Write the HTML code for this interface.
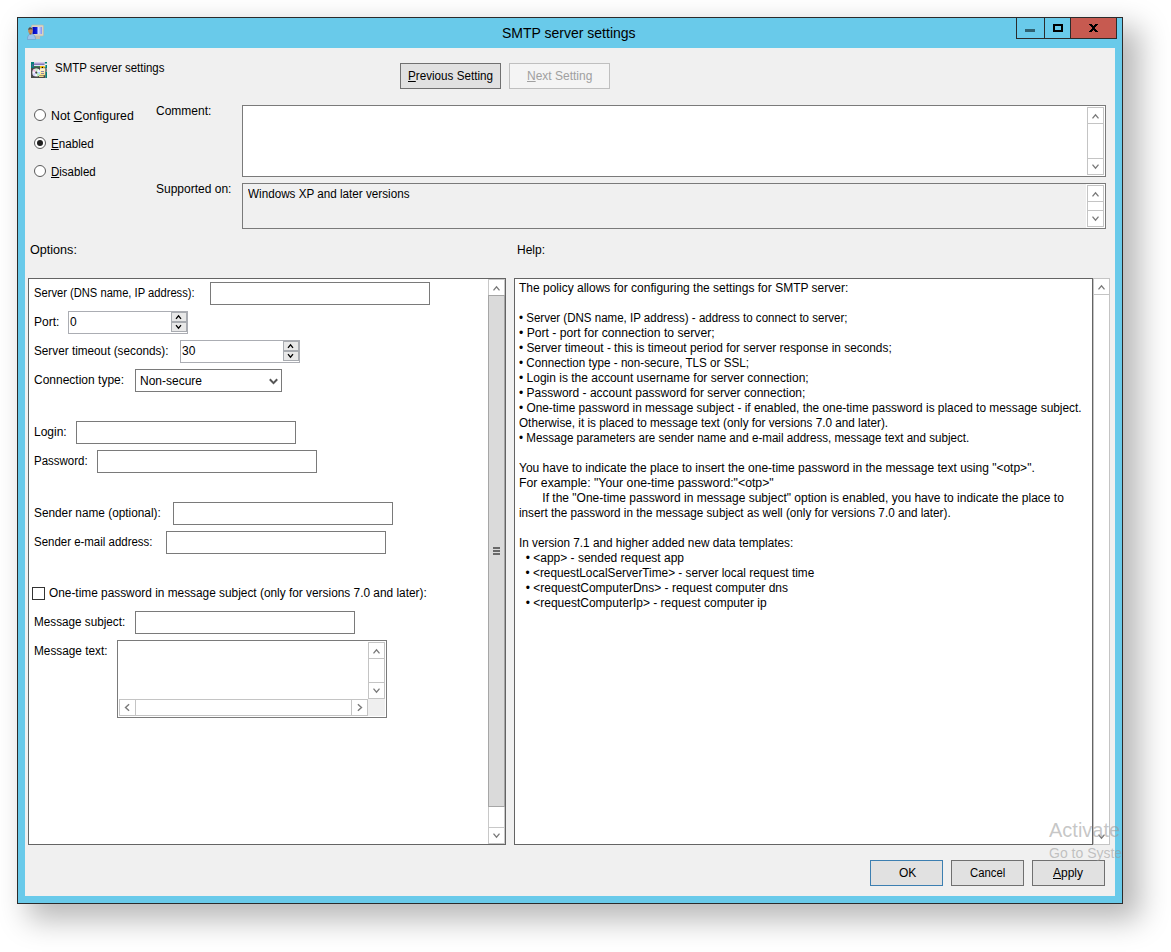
<!DOCTYPE html>
<html><head><meta charset="utf-8">
<style>
html,body{margin:0;padding:0;}
body{width:1171px;height:952px;overflow:hidden;background:#fff;position:relative;font-family:"Liberation Sans",sans-serif;font-size:12px;color:#000;}
.a{position:absolute;box-sizing:border-box;}
.t{position:absolute;white-space:pre;line-height:15px;font-size:12px;}
.u{text-decoration:underline;}
</style></head><body>

<div class="a" style="left:17px;top:17px;width:1106px;height:887px;border:1px solid #2b2b2b;background:#69caea;box-shadow:14px 13px 28px 3px rgba(0,0,0,0.28);"></div>
<div class="a" style="left:25px;top:48px;width:1090px;height:848px;background:#f0f0f0;"></div>
<svg class="a" style="left:27px;top:24px" width="17" height="17" viewBox="0 0 17 17">
<defs><linearGradient id="scr" x1="0" x2="1" y1="0" y2="0"><stop offset="0" stop-color="#0000b0"/><stop offset="0.45" stop-color="#1020e0"/><stop offset="0.6" stop-color="#d8e0ff"/><stop offset="1" stop-color="#8090f0"/></linearGradient></defs>
<rect x="4.5" y="1" width="12" height="11" rx="1" fill="#d8d2c4" stroke="#bdb5a5" stroke-width="0.6"/>
<rect x="5.5" y="3" width="9.5" height="7" fill="url(#scr)"/>
<rect x="8" y="12" width="5" height="3" fill="#c4bcae"/>
<path d="M0.3 15.5 Q0.5 10 4.2 10 Q8.3 10 8.6 15.5 Z" fill="#9cc4ec" stroke="#6c98c8" stroke-width="0.6"/>
<ellipse cx="3.4" cy="6.6" rx="2.2" ry="3.1" fill="#c88a50"/>
<path d="M1.2 6 Q1.5 2.8 3.6 3.4 Q5.6 3.4 5.6 6 Q4.5 4.6 1.2 6Z" fill="#505050"/>
<rect x="2.6" y="9" width="1.8" height="1.5" fill="#a86a38"/>
</svg>
<div class="t" style="left:502px;top:24px;font-size:14px;line-height:18px;">SMTP server settings</div>
<div class="a" style="left:1016px;top:17px;width:29px;height:22px;border:1px solid #2b2b2b;"></div>
<div class="a" style="left:1044px;top:17px;width:27px;height:22px;border:1px solid #2b2b2b;"></div>
<div class="a" style="left:1070px;top:17px;width:47px;height:22px;border:1px solid #2b2b2b;background:#c75a50;"></div>
<div class="a" style="left:1025px;top:29px;width:10px;height:3px;background:#2f6272;"></div>
<div class="a" style="left:1053px;top:24px;width:10px;height:8px;border:2px solid #000;"></div>
<svg class="a" style="left:1089px;top:24px" width="9" height="8" viewBox="0 0 9 8" shape-rendering="crispEdges" fill="#000"><rect x="0" y="0" width="3" height="1"/><rect x="6" y="0" width="3" height="1"/><rect x="1" y="1" width="3" height="1"/><rect x="5" y="1" width="3" height="1"/><rect x="2" y="2" width="5" height="1"/><rect x="3" y="3" width="3" height="1"/><rect x="3" y="4" width="3" height="1"/><rect x="2" y="5" width="5" height="1"/><rect x="1" y="6" width="3" height="1"/><rect x="5" y="6" width="3" height="1"/><rect x="0" y="7" width="3" height="1"/><rect x="6" y="7" width="3" height="1"/></svg>
<svg class="a" style="left:31px;top:62px" width="16" height="16" viewBox="0 0 16 16">
<defs><linearGradient id="pur" x1="0" x2="0" y1="0" y2="1"><stop offset="0" stop-color="#e8e0f8"/><stop offset="1" stop-color="#7060a8"/></linearGradient>
<linearGradient id="pad" x1="0" x2="0" y1="0" y2="1"><stop offset="0" stop-color="#fff8e0"/><stop offset="1" stop-color="#ffe080"/></linearGradient></defs>
<rect x="0" y="5" width="14.6" height="11" fill="#4a4a4a"/>
<rect x="0" y="0" width="3" height="6" fill="#008078"/>
<rect x="13.6" y="0" width="2.4" height="1.5" fill="#008078"/>
<rect x="14.4" y="3" width="1.6" height="3.5" fill="#008078"/>
<rect x="14.6" y="9.5" width="1.4" height="6.5" fill="#008078"/>
<rect x="14.6" y="6.5" width="1.4" height="3" fill="#808080"/>
<rect x="3" y="0" width="10.6" height="3" fill="url(#pur)"/>
<rect x="1.3" y="2" width="1" height="3" fill="#7050a0"/>
<rect x="3" y="3" width="10.6" height="1" fill="#e0e0f8"/>
<rect x="3" y="4" width="6" height="1.2" fill="#3a8050"/>
<rect x="9" y="4" width="4.6" height="2" fill="#f8c010"/>
<circle cx="11.4" cy="5.6" r="0.8" fill="#000"/>
<circle cx="5.3" cy="10.6" r="4" fill="#f4f2ff"/>
<path d="M5.3 10.6 L1.6 9 A4 4 0 0 1 3.6 7 Z" fill="#f4b8e0"/>
<path d="M5.3 10.6 L4 7 A4 4 0 0 1 7.5 7.3 Z" fill="#c8f0c8"/>
<path d="M5.3 10.6 L8.8 12 A4 4 0 0 1 6.6 14.4 Z" fill="#b8f0b0"/>
<path d="M5.3 10.6 L3.5 14.2 A4 4 0 0 1 1.5 12 Z" fill="#d0d0ff"/>
<path d="M5.3 10.6 L9.2 10 A4 4 0 0 1 8.8 12 Z" fill="#a8d8ff"/>
<circle cx="5.3" cy="10.6" r="1.1" fill="#404040"/>
<rect x="9" y="6.2" width="5" height="7" fill="url(#pad)"/>
<rect x="10" y="9" width="3" height="0.9" fill="#8078a8"/>
<rect x="10" y="11" width="3" height="0.9" fill="#8078a8"/>
<rect x="8" y="13.6" width="4.6" height="1.3" fill="#ffe890"/>
</svg>
<div class="t" style="left:55px;top:61px;transform:scaleX(0.9558);transform-origin:0 0;">SMTP server settings</div>
<div class="a" style="left:400px;top:63px;width:101px;height:26px;background:#e1e1e1;border:1px solid #707070;"></div>
<div class="t" style="left:408px;top:69px;transform:scaleX(0.9724);transform-origin:0 0;"><span class="u">P</span>revious Setting</div>
<div class="a" style="left:509px;top:63px;width:101px;height:26px;background:#f4f4f4;border:1px solid #bfbfbf;"></div>
<div class="t" style="left:527px;top:69px;color:#a0a0a0;"><span class="u">N</span>ext Setting</div>
<div class="a" style="left:34px;top:109px;width:12px;height:12px;border:1px solid #5a5a5a;border-radius:50%;background:#fff;"></div>
<div class="t" style="left:51px;top:109px;transform:scaleX(1.0253);transform-origin:0 0;">Not <span class="u">C</span>onfigured</div>
<div class="a" style="left:34px;top:137px;width:12px;height:12px;border:1px solid #5a5a5a;border-radius:50%;background:#fff;"></div>
<div class="a" style="left:37px;top:140px;width:6px;height:6px;border-radius:50%;background:#1e1e1e;"></div>
<div class="t" style="left:51px;top:137px;transform:scaleX(0.9698);transform-origin:0 0;"><span class="u">E</span>nabled</div>
<div class="a" style="left:34px;top:165px;width:12px;height:12px;border:1px solid #5a5a5a;border-radius:50%;background:#fff;"></div>
<div class="t" style="left:51px;top:165px;transform:scaleX(0.9565);transform-origin:0 0;"><span class="u">D</span>isabled</div>
<div class="t" style="left:156px;top:104px;">Comment:</div>
<div class="t" style="left:156px;top:182px;">Supported on:</div>
<div class="a" style="left:242px;top:105px;width:864px;height:72px;background:#fff;border:1px solid #7a7a7a;"></div>
<div class="a" style="left:1087px;top:107px;width:17px;height:68px;border:1px solid #c4c4c4;background:#fff;"></div>
<div class="a" style="left:1087px;top:123px;width:17px;height:1px;background:#c4c4c4;"></div>
<div class="a" style="left:1087px;top:158px;width:17px;height:1px;background:#c4c4c4;"></div>
<div class="a" style="left:242px;top:183px;width:864px;height:46px;background:#f0f0f0;border:1px solid #7a7a7a;"></div>
<div class="a" style="left:1086px;top:184px;width:19px;height:44px;background:#fff;"></div>
<div class="a" style="left:1087px;top:185px;width:17px;height:42px;border:1px solid #c4c4c4;background:#fff;"></div>
<div class="a" style="left:1087px;top:201px;width:17px;height:1px;background:#c4c4c4;"></div>
<div class="a" style="left:1087px;top:210px;width:17px;height:1px;background:#c4c4c4;"></div>
<div class="a" style="left:1087px;top:210px;width:17px;height:1px;background:#c4c4c4;"></div>
<div class="t" style="left:248px;top:187px;transform:scaleX(0.9739);transform-origin:0 0;">Windows XP and later versions</div>
<div class="t" style="left:30px;top:243px;transform:scaleX(1.0500);transform-origin:0 0;">Options:</div>
<div class="t" style="left:517px;top:243px;">Help:</div>
<div class="a" style="left:28px;top:278px;width:478px;height:567px;background:#fff;border:1px solid #646464;"></div>
<div class="a" style="left:488px;top:279px;width:17px;height:565px;border:1px solid #c8c8c8;background:#fff;"></div>
<div class="a" style="left:488px;top:295px;width:17px;height:512px;background:#dadada;border:1px solid #a6a6a6;"></div>
<div class="a" style="left:488px;top:827px;width:17px;height:1px;background:#c8c8c8;"></div>
<div class="a" style="left:493px;top:547px;width:7px;height:2px;background:#686868;"></div>
<div class="a" style="left:493px;top:550px;width:7px;height:2px;background:#686868;"></div>
<div class="a" style="left:493px;top:553px;width:7px;height:2px;background:#686868;"></div>
<div class="t" style="left:34px;top:286px;transform:scaleX(0.9310);transform-origin:0 0;">Server (DNS name, IP address):</div>
<div class="a" style="left:210px;top:282px;width:220px;height:23px;background:#fff;border:1px solid #7a7a7a;"></div>
<div class="t" style="left:34px;top:315px;">Port:</div>
<div class="a" style="left:68px;top:311px;width:120px;height:23px;background:#fff;border:1px solid #abadb3;"></div>
<div class="a" style="left:171px;top:312px;width:16px;height:21px;background:#a8abb0;"></div>
<div class="a" style="left:172px;top:313px;width:14px;height:8px;background:#e8e8e8;"></div>
<div class="a" style="left:172px;top:323px;width:14px;height:8px;background:#e8e8e8;"></div>
<div class="a" style="left:171px;top:332px;width:16px;height:1px;background:#fff;"></div>
<div class="t" style="left:70px;top:315px;">0</div>
<div class="t" style="left:34px;top:344px;transform:scaleX(0.9793);transform-origin:0 0;">Server timeout (seconds):</div>
<div class="a" style="left:180px;top:340px;width:120px;height:23px;background:#fff;border:1px solid #abadb3;"></div>
<div class="a" style="left:283px;top:341px;width:16px;height:21px;background:#a8abb0;"></div>
<div class="a" style="left:284px;top:342px;width:14px;height:8px;background:#e8e8e8;"></div>
<div class="a" style="left:284px;top:352px;width:14px;height:8px;background:#e8e8e8;"></div>
<div class="a" style="left:283px;top:361px;width:16px;height:1px;background:#fff;"></div>
<div class="t" style="left:182px;top:344px;">30</div>
<div class="t" style="left:34px;top:373px;">Connection type:</div>
<div class="a" style="left:135px;top:369px;width:147px;height:23px;background:#fff;border:1px solid #7a7a7a;"></div>
<div class="t" style="left:140px;top:374px;">Non-secure</div>
<div class="t" style="left:34px;top:425px;">Login:</div>
<div class="a" style="left:76px;top:421px;width:220px;height:23px;background:#fff;border:1px solid #7a7a7a;"></div>
<div class="t" style="left:34px;top:454px;transform:scaleX(0.9574);transform-origin:0 0;">Password:</div>
<div class="a" style="left:97px;top:450px;width:220px;height:23px;background:#fff;border:1px solid #7a7a7a;"></div>
<div class="t" style="left:34px;top:506px;transform:scaleX(0.9843);transform-origin:0 0;">Sender name (optional):</div>
<div class="a" style="left:173px;top:502px;width:220px;height:23px;background:#fff;border:1px solid #7a7a7a;"></div>
<div class="t" style="left:34px;top:535px;transform:scaleX(0.9549);transform-origin:0 0;">Sender e-mail address:</div>
<div class="a" style="left:166px;top:531px;width:220px;height:23px;background:#fff;border:1px solid #7a7a7a;"></div>
<div class="a" style="left:32px;top:587px;width:13px;height:13px;background:#fff;border:1px solid #333;"></div>
<div class="t" style="left:49px;top:586px;transform:scaleX(0.9884);transform-origin:0 0;">One-time password in message subject (only for versions 7.0 and later):</div>
<div class="t" style="left:34px;top:615px;transform:scaleX(0.9769);transform-origin:0 0;">Message subject:</div>
<div class="a" style="left:135px;top:611px;width:220px;height:23px;background:#fff;border:1px solid #7a7a7a;"></div>
<div class="t" style="left:34px;top:644px;transform:scaleX(0.9833);transform-origin:0 0;">Message text:</div>
<div class="a" style="left:117px;top:640px;width:270px;height:78px;background:#fff;border:1px solid #7a7a7a;"></div>
<div class="a" style="left:368px;top:642px;width:17px;height:57px;border:1px solid #c4c4c4;background:#fff;"></div>
<div class="a" style="left:368px;top:658px;width:17px;height:1px;background:#c4c4c4;"></div>
<div class="a" style="left:368px;top:682px;width:17px;height:1px;background:#c4c4c4;"></div>
<div class="a" style="left:119px;top:699px;width:249px;height:17px;border:1px solid #c4c4c4;background:#fff;"></div>
<div class="a" style="left:135px;top:699px;width:1px;height:17px;background:#c4c4c4;"></div>
<div class="a" style="left:351px;top:699px;width:1px;height:17px;background:#c4c4c4;"></div>
<div class="a" style="left:368px;top:699px;width:17px;height:17px;background:#efefef;"></div>
<div class="a" style="left:514px;top:278px;width:579px;height:567px;background:#fff;border:1px solid #646464;"></div>
<div class="a" style="left:1093px;top:278px;width:17px;height:567px;border:1px solid #c4c4c4;background:#fff;"></div>
<div class="a" style="left:1093px;top:294px;width:17px;height:1px;background:#c4c4c4;"></div>
<div class="t" style="left:519px;top:281px;">The policy allows for configuring the settings for SMTP server:</div>
<div class="t" style="left:519px;top:311px;transform:scaleX(0.9600);transform-origin:0 0;">• Server (DNS name, IP address) - address to connect to server;</div>
<div class="t" style="left:519px;top:326px;transform:scaleX(1.0136);transform-origin:0 0;">• Port - port for connection to server;</div>
<div class="t" style="left:519px;top:341px;transform:scaleX(0.9885);transform-origin:0 0;">• Server timeout - this is timeout period for server response in seconds;</div>
<div class="t" style="left:519px;top:356px;transform:scaleX(0.9711);transform-origin:0 0;">• Connection type - non-secure, TLS or SSL;</div>
<div class="t" style="left:519px;top:371px;">• Login is the account username for server connection;</div>
<div class="t" style="left:519px;top:386px;">• Password - account password for server connection;</div>
<div class="t" style="left:519px;top:401px;transform:scaleX(0.9885);transform-origin:0 0;">• One-time password in message subject - if enabled, the one-time password is placed to message subject.</div>
<div class="t" style="left:519px;top:416px;transform:scaleX(0.9776);transform-origin:0 0;">Otherwise, it is placed to message text (only for versions 7.0 and later).</div>
<div class="t" style="left:519px;top:431px;transform:scaleX(0.9666);transform-origin:0 0;">• Message parameters are sender name and e-mail address, message text and subject.</div>
<div class="t" style="left:519px;top:461px;">You have to indicate the place to insert the one-time password in the message text using "&lt;otp&gt;".</div>
<div class="t" style="left:519px;top:476px;transform:scaleX(1.0224);transform-origin:0 0;">For example: "Your one-time password:"&lt;otp&gt;"</div>
<div class="t" style="left:519px;top:491px;">       If the "One-time password in message subject" option is enabled, you have to indicate the place to</div>
<div class="t" style="left:519px;top:506px;transform:scaleX(0.9761);transform-origin:0 0;">insert the password in the message subject as well (only for versions 7.0 and later).</div>
<div class="t" style="left:519px;top:536px;transform:scaleX(0.9809);transform-origin:0 0;">In version 7.1 and higher added new data templates:</div>
<div class="t" style="left:519px;top:551px;">  • &lt;app&gt; - sended request app</div>
<div class="t" style="left:519px;top:566px;transform:scaleX(0.9846);transform-origin:0 0;">  • &lt;requestLocalServerTime&gt; - server local request time</div>
<div class="t" style="left:519px;top:581px;">  • &lt;requestComputerDns&gt; - request computer dns</div>
<div class="t" style="left:519px;top:596px;">  • &lt;requestComputerIp&gt; - request computer ip</div>
<div class="a" style="left:870px;top:860px;width:73px;height:26px;background:#e1e1e1;border:1px solid #3c7fb1;"></div>
<div class="t" style="left:899px;top:866px;">OK</div>
<div class="a" style="left:951px;top:860px;width:73px;height:26px;background:#e1e1e1;border:1px solid #707070;"></div>
<div class="t" style="left:970px;top:866px;transform:scaleX(0.9444);transform-origin:0 0;">Cancel</div>
<div class="a" style="left:1032px;top:860px;width:73px;height:26px;background:#e1e1e1;border:1px solid #707070;"></div>
<div class="t" style="left:1053px;top:866px;"><span class="u">A</span>pply</div>
<svg class="a" style="left:0;top:0" width="1171" height="952" viewBox="0 0 1171 952" fill="none" stroke-linejoin="miter" stroke-linecap="butt"><polyline points="1092.5,118.39999999999999 1095.5,114.8 1098.5,118.39999999999999" stroke="#7a7a7a" stroke-width="1.3"/><polyline points="1092.5,164.6 1095.5,168.2 1098.5,164.6" stroke="#7a7a7a" stroke-width="1.3"/><polyline points="1092.5,196.4 1095.5,192.8 1098.5,196.4" stroke="#7a7a7a" stroke-width="1.3"/><polyline points="1092.5,216.6 1095.5,220.2 1098.5,216.6" stroke="#7a7a7a" stroke-width="1.3"/><polyline points="493.5,290.40000000000003 496.5,286.8 499.5,290.40000000000003" stroke="#7a7a7a" stroke-width="1.3"/><polyline points="493.5,833.6 496.5,837.2 499.5,833.6" stroke="#7a7a7a" stroke-width="1.3"/><polyline points="176.0,318.8 178.5,315.8 181.0,318.8" stroke="#000" stroke-width="1.3"/><polyline points="176.0,325.2 178.5,328.2 181.0,325.2" stroke="#000" stroke-width="1.3"/><polyline points="288.0,347.8 290.5,344.8 293.0,347.8" stroke="#000" stroke-width="1.3"/><polyline points="288.0,354.2 290.5,357.2 293.0,354.2" stroke="#000" stroke-width="1.3"/><polyline points="269.8,379.2 273.5,383.09999999999997 277.2,379.2" stroke="#555" stroke-width="2.0"/><polyline points="373.5,653.4 376.5,649.8 379.5,653.4" stroke="#7a7a7a" stroke-width="1.3"/><polyline points="373.5,688.6 376.5,692.2 379.5,688.6" stroke="#7a7a7a" stroke-width="1.3"/><polyline points="129.1,704.2 125.5,707.5 129.1,710.8" stroke="#7a7a7a" stroke-width="1.4"/><polyline points="357.9,704.2 361.5,707.5 357.9,710.8" stroke="#7a7a7a" stroke-width="1.4"/><polyline points="1098.5,289.40000000000003 1101.5,285.8 1104.5,289.40000000000003" stroke="#7a7a7a" stroke-width="1.3"/><polyline points="1098.5,834.6 1101.5,838.2 1104.5,834.6" stroke="#7a7a7a" stroke-width="1.3"/></svg>
<div class="a" style="left:1040px;top:815px;width:82px;height:50px;overflow:hidden;">
<div class="t" style="left:9px;top:3px;font-size:20px;line-height:24px;color:rgba(150,150,150,0.55);">Activate Windows</div>
<div class="t" style="left:9px;top:29px;font-size:14px;line-height:18px;color:rgba(150,150,150,0.55);">Go to System in Control Panel</div>
</div>
</body></html>
